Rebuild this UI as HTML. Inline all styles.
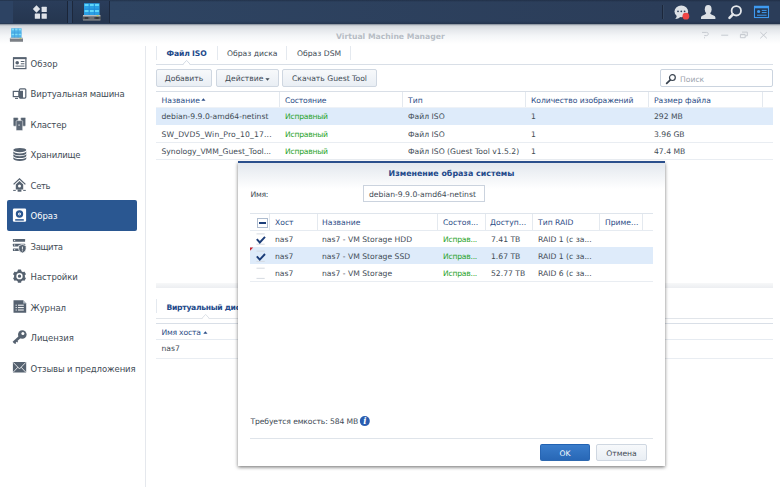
<!DOCTYPE html>
<html lang="ru"><head><meta charset="utf-8"><title>Virtual Machine Manager</title>
<style>
*{box-sizing:border-box;margin:0;padding:0}
html,body{width:780px;height:487px;overflow:hidden;background:#fff}
body{position:relative;font-family:"DejaVu Sans","Liberation Sans",sans-serif;font-size:7.65px;color:#414b55;-webkit-font-smoothing:antialiased}
.abs{position:absolute}
.t{position:absolute;white-space:nowrap;line-height:12px;height:12px}
/* top bar */
#topbar{left:0;top:0;width:780px;height:24px;background:linear-gradient(rgba(20,30,48,.45) 0,rgba(20,30,48,0) 2px,rgba(20,30,48,0) 21px,rgba(20,30,48,.22) 23px,rgba(20,30,48,.3) 24px),linear-gradient(to right,#2e4462 14%,#2b3d59 85%)}
#tb-left{left:0;top:1px;width:110px;height:22px;background:#2d4363;border-right:1px solid #1c283d}
#tb-menu{left:13px;top:1px;width:54px;height:22px;background:linear-gradient(#2a3d5a,#25364f)}
#tb-gap{left:67px;top:1px;width:6px;height:22px;background:#2d4363;border-left:1px solid #1a2538;border-right:1px solid #1d283c}
#tb-app{left:73px;top:1px;width:36px;height:22px;background:linear-gradient(#2a3d5b,#25364f)}
#tb-sep{left:662px;top:5px;width:1px;height:14px;background:#1c273b;box-shadow:1px 0 0 #34465f}
/* window title */
#wtitle{left:0;top:24px;width:780px;height:22px;background:linear-gradient(#747e8b 0,#b4bac2 1px,#d5d9de 2px,#e5e8ec 6px,#f4f6f8 12px,#fff 20px)}
#wname{left:336px;top:31px;font-weight:bold;color:#b7bdc5;font-size:7.7px}
/* sidebar */
#sideline{left:145px;top:46px;width:1px;height:441px;background:#e5e8ed}
.nav{left:30.6px;font-size:8.5px;color:#414b55}
#sel{left:7px;top:200px;width:129.500px;height:30.500px;background:#2a5791;border-radius:2px}
/* tabs */
.tab{font-size:7.65px;color:#414b55}
.tabb{font-weight:bold;color:#22498a}
.vline{width:1px;background:#e4e9ef}
.hline{height:1px;background:#d9dfe7}
/* buttons */
.btn{position:absolute;height:17px;border:1px solid #cfd7e1;border-radius:2px;background:linear-gradient(#f7f9fb,#e9eef4);text-align:center;line-height:17px;font-size:7.65px;color:#414b55;white-space:nowrap}
.hd{color:#2c4d86}
.ok{color:#2aa42a;letter-spacing:-.25px}
.row{position:absolute;height:17px}
.rowsel{background:#deebfa}
</style></head><body>

<!-- ===== top bar ===== -->
<div id="topbar" class="abs"></div>
<div id="tb-left" class="abs"></div>
<div id="tb-menu" class="abs"></div>
<div id="tb-gap" class="abs"></div>
<div id="tb-app" class="abs"></div>
<div id="tb-sep" class="abs"></div>

<!-- ===== window title ===== -->
<div id="wtitle" class="abs"></div>
<div id="wname" class="t">Virtual Machine Manager</div>

<!-- ===== sidebar ===== -->
<div id="sideline" class="abs"></div>
<div id="sel" class="abs"></div>
<div class="t nav" style="top:58px;letter-spacing:0px">Обзор</div>
<div class="t nav" style="top:88px;letter-spacing:-0.15px">Виртуальная машина</div>
<div class="t nav" style="top:119px;letter-spacing:-0.15px">Кластер</div>
<div class="t nav" style="top:149px;letter-spacing:-0.22px">Хранилище</div>
<div class="t nav" style="top:180px;letter-spacing:-0.4px">Сеть</div>
<div class="t nav" style="top:210px;letter-spacing:-0.05px;color:#fff">Образ</div>
<div class="t nav" style="top:241px;letter-spacing:-0.4px">Защита</div>
<div class="t nav" style="top:271px;letter-spacing:-0.1px">Настройки</div>
<div class="t nav" style="top:302px;letter-spacing:-0.08px">Журнал</div>
<div class="t nav" style="top:332px;letter-spacing:-0.07px">Лицензия</div>
<div class="t nav" style="top:363px;letter-spacing:-0.12px">Отзывы и предложения</div>

<!-- ===== icons ===== -->
<svg class="abs" style="left:0;top:0" width="780" height="487" viewBox="0 0 780 487">
<!-- main menu -->
<g fill="#dfe3e9">
<rect x="33.9" y="6.4" width="5.2" height="5.2" transform="rotate(45 36.5 9)"/>
<rect x="41.6" y="6.8" width="5.2" height="5.2" rx=".5"/>
<rect x="34.8" y="13.6" width="5.2" height="5.2" rx=".5"/>
<rect x="41.6" y="13.6" width="5.2" height="5.2" rx=".5"/>
</g>
<!-- VMM taskbar icon -->
<g id="vmm">
<rect x="84" y="3.2" width="15.6" height="12.1" fill="#2a9fe4"/>
<g fill="#5fd6fa"><rect x="84.7" y="4" width="4" height="2"/><rect x="89.8" y="4" width="4" height="2"/><rect x="94.9" y="4" width="4" height="2"/>
<rect x="84.7" y="10" width="4" height="2"/><rect x="89.8" y="10" width="4" height="2"/><rect x="94.9" y="10" width="4" height="2"/></g>
<g stroke="#1d84d0" stroke-width=".6"><path d="M84 9.200h15.600M89.200 3.200v12.100M94.400 3.200v12.100"/></g>
<rect x="82.600" y="15.200" width="18.200" height="5.200" rx=".8" fill="#50545a"/>
<rect x="83" y="15.200" width="17.400" height="1.200" fill="#d3d5d8"/>
<rect x="83" y="19.500" width="17.400" height=".9" fill="#9a9da1"/>
<rect x="84.800" y="17.500" width="3.200" height="1" fill="#1e2024"/><rect x="89.400" y="17.500" width="4.600" height="1" fill="#85888c"/><rect x="95.400" y="17.500" width="3.200" height="1" fill="#1e2024"/>
<rect x="96.600" y="15.400" width="2" height=".8" fill="#b4d23a"/>
</g>
<!-- window icon (small VMM) -->
<g>
<rect x="11.100" y="28.300" width="10.500" height="9.600" fill="#52b4e9"/>
<g fill="#80ddf7"><rect x="11.700" y="28.900" width="2.600" height="1.500"/><rect x="15.100" y="28.900" width="2.600" height="1.500"/><rect x="18.500" y="28.900" width="2.600" height="1.500"/>
<rect x="11.700" y="33.600" width="2.600" height="1.500"/><rect x="15.100" y="33.600" width="2.600" height="1.500"/><rect x="18.500" y="33.600" width="2.600" height="1.500"/></g>
<g stroke="#3a9bdb" stroke-width=".5"><path d="M11.100 33.100h10.500M14.600 28.300v9.600M18.100 28.300v9.600"/></g>
<rect x="9.900" y="37.800" width="13.100" height="4.100" rx=".7" fill="#7b7f85"/>
<rect x="10.200" y="37.800" width="12.500" height="1.100" fill="#c4c6c9"/>
<rect x="10.200" y="41.100" width="12.500" height=".8" fill="#a3a6aa"/>
<rect x="19.600" y="38" width="1.600" height=".7" fill="#b4d23a"/>
</g>
<!-- top right icons -->
<g fill="#dde1e6">
<ellipse cx="681.3" cy="11.4" rx="6.8" ry="5.9"/>
<path d="M676.6 14.5c.4 1.8-.2 3.3-1.4 4.4 2.6 0 4.6-1 5.8-2.6z"/>
<ellipse cx="708.2" cy="9.2" rx="3.4" ry="4.3"/>
<path d="M701 19v-1.6c0-1.2 1.2-1.9 3-2.5 1.500-.5 2.300-1.100 2.300-2.400h3.800c0 1.300.8 1.900 2.300 2.400 1.800.6 3 1.300 3 2.500V19z"/>
</g>
<g fill="#2b3d59"><circle cx="678" cy="11.3" r=".9"/><circle cx="681.3" cy="11.3" r=".9"/><circle cx="684.6" cy="11.3" r=".9"/></g>
<circle cx="685.9" cy="16.2" r="3.4" fill="#f04646"/>
<circle cx="736.3" cy="10.8" r="4.7" fill="none" stroke="#e4e7eb" stroke-width="1.8"/>
<path d="M732.900 14.400L729.500 17.900" stroke="#e4e7eb" stroke-width="2.600" stroke-linecap="round"/>
<rect x="754.5" y="6.400" width="14" height="11.100" fill="#24364f" stroke="#3e9af0" stroke-width="1.100"/>
<rect x="754" y="5.900" width="15" height="2.400" fill="#3e9af0"/>
<circle cx="758.6" cy="11.500" r="1.600" fill="#3e9af0"/>
<path d="M761.800 10.400h4.800M761.800 12.600h4.800M757 15.200h9.600" stroke="#3e9af0" stroke-width="1"/>
<!-- window controls -->
<g stroke="#c6cad0" stroke-width="1" fill="none">
<path d="M702 32.400h4.600c2.300 0 2.300 3.100-.1 3.200h-2v.5M704.500 37.300v1"/>
<path d="M721.200 35.200h7"/>
<path d="M740.400 34.700h4.800v3h-4.800zM740.400 34.300h4.800M742 32.100h5.300v3.700h-1.600"/>
<path d="M760.300 32.100l6.500 6.200M766.800 32.100l-6.500 6.200"/>
</g>

<!-- sidebar: overview -->
<g stroke="#566270" fill="none">
<rect x="13.500" y="58" width="12.400" height="10.600" stroke-width="1.200"/>
<path d="M13 58.200h13.400" stroke-width="1.900"/>
<path d="M20.800 61.500h3.600M20.800 63.800h3.600M15.500 66.100h8.900" stroke-width="1"/>
</g>
<circle cx="17.200" cy="62.700" r="1.800" fill="#566270"/>
<!-- sidebar: VM -->
<g>
<rect x="19.400" y="88.800" width="6.400" height="9.300" rx="1" fill="none" stroke="#566270" stroke-width="1.200"/>
<rect x="19.400" y="90.800" width="3.600" height="7.300" fill="#566270"/>
<rect x="13.300" y="91.400" width="5.600" height="5.200" fill="none" stroke="#566270" stroke-width="1.200"/>
<path d="M15 98.400h3" stroke="#566270" stroke-width="1.100"/>
</g>
<!-- sidebar: cluster -->
<g fill="#566270" stroke="#fff" stroke-width=".5">
<rect x="13.200" y="117.400" width="5" height="8.800" rx=".9"/>
<rect x="20.700" y="117.400" width="5" height="8.800" rx=".9"/>
<rect x="16.100" y="120.600" width="6.600" height="10" rx=".9" fill="#5d6876"/>
</g>
<rect x="18.600" y="124.300" width=".9" height="1.700" fill="#e6e9ec"/>
<!-- sidebar: storage -->
<g fill="#566270">
<ellipse cx="19.800" cy="150.100" rx="6.500" ry="2.150"/>
<path d="M13.300 151.300a6.500 2.1 0 0 0 13 0v1.9a6.500 2.1 0 0 1 -13 0z"/>
<path d="M13.300 154.100a6.500 2.1 0 0 0 13 0v1.9a6.500 2.1 0 0 1 -13 0z"/>
<path d="M13.300 156.900a6.500 2.1 0 0 0 13 0v1.9a6.500 2.1 0 0 1 -13 0z"/>
</g>
<!-- sidebar: network -->
<g>
<path d="M13.600 184.400l5.900-5.600 5.900 5.600" fill="none" stroke="#566270" stroke-width="1.300"/>
<path d="M15.800 184.600l3.700-3.500 3.700 3.500v4.800h-7.400z" fill="#566270"/>
<circle cx="19.500" cy="186" r="1.500" fill="#fff"/>
<path d="M13.200 190.400h2.600M23.200 190.400h2.600" stroke="#566270" stroke-width="1"/>
<rect x="17.600" y="189.400" width="3.800" height="2.300" fill="#566270"/>
</g>
<!-- sidebar: image (selected) -->
<rect x="12.900" y="208.600" width="13.200" height="13.200" rx="1.200" fill="#fff"/>
<circle cx="19.500" cy="214" r="2.600" fill="none" stroke="#2a5791" stroke-width="2.200"/><circle cx="19.500" cy="214" r=".6" fill="#2a5791"/>
<path d="M15.200 219.900h8.600" stroke="#2a5791" stroke-width="1.500"/>
<!-- sidebar: protection -->
<g fill="#566270">
<rect x="12.900" y="239" width="12.200" height="2.700" rx=".5"/>
<rect x="12.900" y="243.700" width="12.200" height="2.700" rx=".5"/>
<rect x="12.900" y="248.400" width="7" height="2.700" rx=".5"/>
<path d="M22.400 244.400l3.700 1.300v3c0 2.100-1.600 3.600-3.700 4.400-2.100-.8-3.700-2.300-3.700-4.400v-3z" stroke="#fff" stroke-width=".8"/>
</g>
<path d="M22.400 246.600v2.900M22.400 250.400v.9" stroke="#fff" stroke-width=".9"/>
<g fill="#fff"><rect x="14" y="239.900" width="1.200" height=".9"/><rect x="14" y="244.600" width="1.200" height=".9"/><rect x="14" y="249.300" width="1.200" height=".9"/></g>
<!-- sidebar: settings gear -->
<g transform="translate(19.500 276.200)">
<g fill="#566270">
<circle r="5.400"/>
<rect x="-1.700" y="-6.600" width="3.400" height="13.200" rx=".6"/>
<rect x="-1.700" y="-6.600" width="3.400" height="13.200" rx=".6" transform="rotate(60)"/>
<rect x="-1.700" y="-6.600" width="3.400" height="13.200" rx=".6" transform="rotate(120)"/>
</g>
<circle r="2.400" fill="none" stroke="#fff" stroke-width="1.500"/>
</g>
<!-- sidebar: log -->
<path d="M13.500 300.300h9.600l3.100 3.100v9.400h-12.700z" fill="#566270"/>
<path d="M23.100 300.300v3.100h3.100z" fill="#aeb6bf"/>
<path d="M18 305.200h5.800M18 307.600h5.800M18 310h5.800" stroke="#fff" stroke-width="1"/>
<path d="M15.600 305.200h1.200M15.600 307.600h1.200M15.600 310h1.200" stroke="#fff" stroke-width="1"/>
<!-- sidebar: license key -->
<circle cx="22.300" cy="334.500" r="4.300" fill="#566270"/>
<circle cx="22.900" cy="333.600" r="1.500" fill="#fff"/>
<path d="M19.800 337.100l-6.300 5.700" stroke="#566270" stroke-width="2.700"/>
<path d="M16 340.300l1.700 1.900M14.300 341.800l1.500 1.700" stroke="#566270" stroke-width="1.200"/>
<!-- sidebar: feedback envelope -->
<rect x="12.900" y="362" width="13.300" height="10.600" rx=".6" fill="#566270"/>
<path d="M13.200 362.400l6.300 6.500 6.300-6.500M13.200 372.200l4.700-5M25.800 372.200l-4.700-5" fill="none" stroke="#fff" stroke-width=".8"/>
</svg>

<!-- ===== tabs ===== -->
<div class="abs vline" style="left:156px;top:46px;height:14px"></div>
<div class="abs vline" style="left:217px;top:46px;height:14px"></div>
<div class="abs vline" style="left:286px;top:46px;height:14px"></div>
<div class="abs vline" style="left:350px;top:46px;height:14px"></div>
<div class="t tab tabb" style="left:166.5px;top:48px;letter-spacing:-0.15px">Файл ISO</div>
<div class="t tab" style="left:227px;top:48px">Образ диска</div>
<div class="t tab" style="left:297px;top:48px">Образ DSM</div>
<div class="abs hline" style="left:156px;top:64px;width:617px"></div>
<svg class="abs" style="left:181px;top:59px" width="12" height="7" viewBox="0 0 12 7"><path d="M1.800 6.500L5.600 1.700 9.400 6.500z" fill="#fff"/><path d="M1.800 5.500L5.600 1.400 9.400 5.500" fill="none" stroke="#d5dce5" stroke-width="1"/></svg>

<!-- ===== toolbar ===== -->
<div class="btn" style="left:156px;top:69px;height:18px;width:56px">Добавить</div>
<div class="btn" style="left:216px;top:69px;height:18px;width:62.500px;text-align:left;padding-left:8px">Действие</div>
<svg class="abs" style="left:265.200px;top:77.500px" width="5" height="3" viewBox="0 0 5 3"><path d="M.4.300h4.200L2.500 2.700z" fill="#414b55"/></svg>
<div class="btn" style="left:282px;top:69px;height:18px;width:95px">Скачать Guest Tool</div>
<div class="abs" style="left:660px;top:69px;width:113px;height:18px;border:1px solid #cbd4df;border-radius:2px;background:#fff"></div>
<svg class="abs" style="left:664px;top:71.700px" width="14" height="14" viewBox="0 0 14 14"><circle cx="8.400" cy="5.600" r="2.900" fill="none" stroke="#3a4450" stroke-width="1.200"/><path d="M6.100 8.100L2.700 11.300" stroke="#3a4450" stroke-width="1.800" stroke-linecap="round"/></svg>
<div class="t" style="left:680px;top:74px;color:#9aa3ad">Поиск</div>

<!-- ===== main grid ===== -->
<div class="abs hline" style="left:156px;top:91px;width:617px"></div>
<div class="abs hline" style="left:156px;top:107px;width:617px;background:#eef2f7"></div>
<div class="row rowsel" style="left:156px;top:108px;width:617px"></div>
<div class="abs hline" style="left:156px;top:142px;width:617px;background:#e9edf2"></div>
<div class="abs hline" style="left:156px;top:159px;width:617px;background:#e9edf2"></div>

<div class="abs vline" style="left:279px;top:92px;height:15px"></div>
<div class="abs vline" style="left:402px;top:92px;height:15px"></div>
<div class="abs vline" style="left:525px;top:92px;height:15px"></div>
<div class="abs vline" style="left:648px;top:92px;height:15px"></div>
<div class="abs vline" style="left:762px;top:92px;height:15px"></div>
<div class="t hd" style="left:161.500px;top:95px">Название</div>
<svg class="abs" style="left:201.200px;top:98.400px" width="5" height="3" viewBox="0 0 5 3"><path d="M.3 2.800h4.200L2.400.300z" fill="#2c4d86"/></svg>
<div class="t hd" style="left:285px;top:95px;letter-spacing:-.15px">Состояние</div>
<div class="t hd" style="left:408px;top:95px">Тип</div>
<div class="t hd" style="left:531px;top:95px;letter-spacing:-0.07px">Количество изображений</div>
<div class="t hd" style="left:654px;top:95px">Размер файла</div>

<div class="t" style="left:161.500px;top:111px">debian-9.9.0-amd64-netinst</div>
<div class="t ok" style="left:285px;top:111px">Исправный</div>
<div class="t" style="left:408px;top:111px">Файл ISO</div>
<div class="t" style="left:531px;top:111px">1</div>
<div class="t" style="left:654px;top:111px">292 MB</div>

<div class="t" style="left:161.500px;top:129px;letter-spacing:.16px">SW_DVD5_Win_Pro_10_17...</div>
<div class="t ok" style="left:285px;top:129px">Исправный</div>
<div class="t" style="left:408px;top:129px">Файл ISO</div>
<div class="t" style="left:531px;top:129px">1</div>
<div class="t" style="left:654px;top:129px">3.96 GB</div>

<div class="t" style="left:161.500px;top:146px">Synology_VMM_Guest_Tool...</div>
<div class="t ok" style="left:285px;top:146px">Исправный</div>
<div class="t" style="left:408px;top:146px">Файл ISO (Guest Tool v1.5.2)</div>
<div class="t" style="left:531px;top:146px">1</div>
<div class="t" style="left:654px;top:146px">47.4 MB</div>

<!-- ===== bottom panel ===== -->
<div class="abs" style="left:156px;top:283px;width:617px;height:5px;background:linear-gradient(#f7f8f9,#eceef1)"></div>
<div class="abs vline" style="left:156px;top:299px;height:14px"></div>
<div class="t tab tabb" style="left:166.500px;top:302px;letter-spacing:-0.3px">Виртуальный диск</div>
<div class="abs hline" style="left:156px;top:318px;width:617px;background:#e1e5ea"></div>
<svg class="abs" style="left:200px;top:313px" width="12" height="7" viewBox="0 0 12 7"><path d="M1.800 6.500L5.600 1.700 9.400 6.500z" fill="#fff"/><path d="M1.800 5.500L5.600 1.400 9.400 5.500" fill="none" stroke="#dde2e8" stroke-width="1"/></svg>
<div class="abs hline" style="left:156px;top:323px;width:617px"></div>
<div class="t hd" style="left:161.400px;top:327px;letter-spacing:-.2px">Имя хоста</div>
<svg class="abs" style="left:202.600px;top:330.600px" width="5" height="3" viewBox="0 0 5 3"><path d="M.3 2.800h4.200L2.400.300z" fill="#2c4d86"/></svg>
<div class="abs hline" style="left:156px;top:339px;width:617px;background:#e6ebf1"></div>
<div class="t" style="left:161.500px;top:343px">nas7</div>
<div class="abs hline" style="left:156px;top:357.500px;width:617px;background:#e9edf2"></div>

<!-- ===== dialog ===== -->
<div id="dlg" class="abs" style="left:238px;top:161px;width:427px;height:305px;background:#fff;border-top:2px solid #2a4f8c;box-shadow:0 1.5px 3.5px rgba(0,0,0,.55)">
<div class="abs" style="left:0;top:0;width:427px;height:26px;background:linear-gradient(#e3e8ee,#fff)"></div>
</div>
<div class="t" style="left:351.500px;top:168px;width:200px;text-align:center;font-weight:bold;color:#22498a;font-size:7.9px">Изменение образа системы</div>
<div class="t" style="left:250.500px;top:189px;letter-spacing:-0.3px">Имя:</div>
<div class="abs" style="left:363px;top:185px;width:122px;height:17px;border:1px solid #cbd3de;background:#fff"></div>
<div class="t" style="left:369px;top:189px">debian-9.9.0-amd64-netinst</div>

<!-- dialog grid -->
<div class="abs hline" style="left:250px;top:213px;width:403px;background:#dfe5ec"></div>
<div class="abs hline" style="left:250px;top:230px;width:403px;background:#e6ebf1"></div>
<div class="row rowsel" style="left:250px;top:247px;width:403px"></div>
<div class="abs hline" style="left:250px;top:281px;width:403px;background:#e9edf2"></div>
<div class="abs vline" style="left:269px;top:214px;height:16px"></div>
<div class="abs vline" style="left:317px;top:214px;height:16px"></div>
<div class="abs vline" style="left:437px;top:214px;height:16px"></div>
<div class="abs vline" style="left:485px;top:214px;height:16px"></div>
<div class="abs vline" style="left:532px;top:214px;height:16px"></div>
<div class="abs vline" style="left:599px;top:214px;height:16px"></div>
<div class="abs vline" style="left:642px;top:214px;height:16px"></div>

<!-- checkboxes -->
<div class="abs" style="left:257px;top:217.500px;width:10.500px;height:10.500px;border:1px solid #aebccf;background:#fff"></div>
<div class="abs" style="left:259.300px;top:221.600px;width:6.800px;height:2.400px;background:#1d3f7a"></div>
<svg class="abs" style="left:250px;top:230px" width="24" height="52" viewBox="0 0 24 52">
<g stroke="#d5dae1" stroke-width="1"><path d="M6.500 3.900h8.200M6.500 14.200h8.200M6.500 21.100h8.200M6.500 31.400h8.200M6.500 38.200h8.200M6.500 48.400h8.200"/></g>
<path d="M6.800 9.100l3 3.400 5.200-5.700" fill="none" stroke="#1b3c78" stroke-width="1.900"/>
<path d="M6.800 26.300l3 3.400 5.200-5.700" fill="none" stroke="#1b3c78" stroke-width="1.900"/>
<path d="M0 17.400h3.200L0 20.800z" fill="#c8202a"/>
</svg>
<div class="t hd" style="left:275px;top:217px">Хост</div>
<div class="t hd" style="left:322px;top:217px">Название</div>
<div class="t hd" style="left:443px;top:217px">Состоя...</div>
<div class="t hd" style="left:490px;top:217px">Доступ...</div>
<div class="t hd" style="left:538px;top:217px">Тип RAID</div>
<div class="t hd" style="left:605px;top:217px">Приме...</div>

<div class="t" style="left:275px;top:234px">nas7</div>
<div class="t" style="left:322px;top:234px">nas7 - VM Storage HDD</div>
<div class="t ok" style="left:443px;top:234px">Исправ...</div>
<div class="t" style="left:491px;top:234px">7.41 TB</div>
<div class="t" style="left:538px;top:234px">RAID 1 (с за...</div>

<div class="t" style="left:275px;top:251px">nas7</div>
<div class="t" style="left:322px;top:251px">nas7 - VM Storage SSD</div>
<div class="t ok" style="left:443px;top:251px">Исправ...</div>
<div class="t" style="left:491px;top:251px">1.67 TB</div>
<div class="t" style="left:538px;top:251px">RAID 1 (с за...</div>

<div class="t" style="left:275px;top:268px">nas7</div>
<div class="t" style="left:322px;top:268px">nas7 - VM Storage</div>
<div class="t ok" style="left:443px;top:268px">Исправ...</div>
<div class="t" style="left:491px;top:268px">52.77 TB</div>
<div class="t" style="left:538px;top:268px">RAID 6 (с за...</div>

<div class="t" style="left:250.500px;top:416px;letter-spacing:-0.12px">Требуется емкость: 584 MB</div>
<svg class="abs" style="left:359px;top:415px" width="12" height="12" viewBox="0 0 12 12"><circle cx="5.800" cy="6.100" r="5" fill="#2a5db0"/><text x="5.800" y="9.300" text-anchor="middle" font-family="'DejaVu Serif','Liberation Serif',serif" font-size="8.500" font-weight="bold" font-style="italic" fill="#fff">i</text></svg>
<div class="abs hline" style="left:250px;top:438px;width:403px;background:#dfe4ea"></div>
<div class="btn" style="left:540px;top:444px;width:50px;background:linear-gradient(#3a7dcb,#2867b6);border-color:#2162b2 #2866b4 #2e69b0;color:#fff">OK</div>
<div class="btn" style="left:596px;top:444px;width:51px">Отмена</div>

</body></html>
